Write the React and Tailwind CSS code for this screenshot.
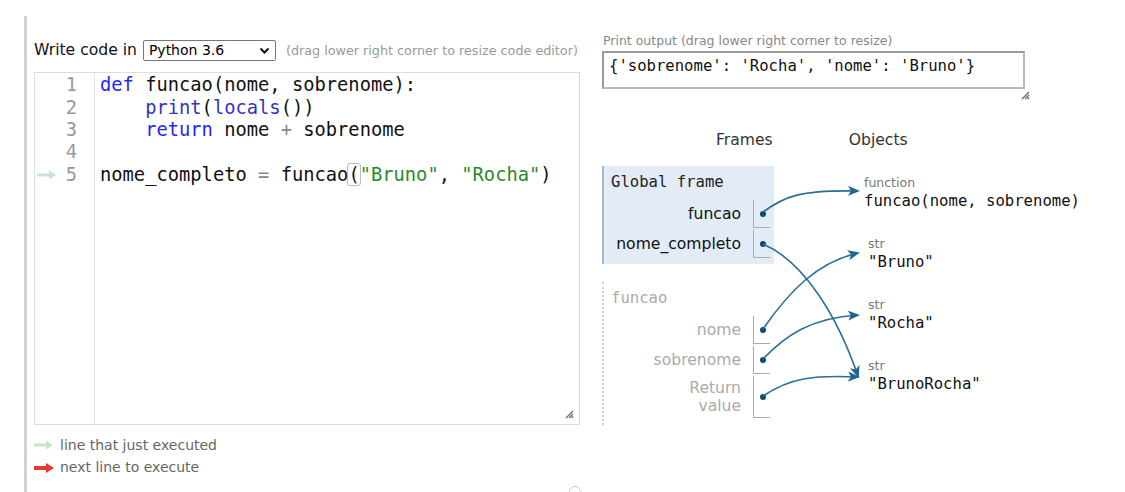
import React from 'react'

const sans = { fontFamily: '"DejaVu Sans", Verdana, sans-serif' }
const mono = { fontFamily: '"DejaVu Sans Mono", "Liberation Mono", monospace' }

function GreenArrow() {
  return (
    <svg width="20" height="10" viewBox="0 0 20 10">
      <path d="M0 3.5 H12 V0.5 L19 5 L12 9.5 V6.5 H0 Z" fill="#c7e5c7" />
    </svg>
  )
}

function RedArrow() {
  return (
    <svg width="20" height="10" viewBox="0 0 20 10">
      <path d="M0 3 H12 V0 L20 5 L12 10 V7 H0 Z" fill="#e8372c" />
    </svg>
  )
}

function ResizeGrip() {
  return (
    <svg width="9" height="9" viewBox="0 0 9 9">
      <path d="M8 1 L1 8 M8 4 L4 8 M8 6.5 L6.5 8" stroke="#666" strokeWidth="1.2" />
    </svg>
  )
}

function CodeLine({ num, arrow, children }) {
  return (
    <div className="flex h-[22.4px] items-center">
      <div className="w-[60px] h-full flex items-center justify-end pr-[18px] text-[#999] relative" style={mono}>
        {arrow && (
          <span className="absolute left-[2px] top-[6px]"><GreenArrow /></span>
        )}
        {num}
      </div>
      <div className="pl-[5px] whitespace-pre text-[#111]">{children}</div>
    </div>
  )
}

function VarRow({ label, muted, tall }) {
  return (
    <div className={'flex justify-end items-center pr-[4px] ' + (tall ? 'h-[42px]' : 'h-[28px]')}>
      <div className={'text-right leading-[18px] ' + (muted ? 'text-[#aaa]' : 'text-[#111]')}>
        {label}
      </div>
      <div className="ml-[12px] w-[17px] h-full border-l border-b border-[#aaa] flex items-center">
        <div className="ml-[6px] w-[6px] h-[6px] rounded-full bg-[#0b4a72]" />
      </div>
    </div>
  )
}

function HeapObj({ type, value, indent }) {
  return (
    <div className={'h-[61px] ' + (indent ? 'pl-[4px]' : '')}>
      <div className="text-[12.5px] leading-[16px] text-[#777]">{type}</div>
      <div className="text-[15.6px] leading-[20px] text-[#111]" style={mono}>{value}</div>
    </div>
  )
}

const kw = 'text-[#2525ff]'
const fn = 'text-[#3434c4]'
const str = 'text-[#2a8a2a]'
const op = 'text-[#888]'

export default function App() {
  return (
    <div className="w-[1125px] h-[492px] bg-white relative overflow-hidden" style={sans}>
      <div className="flex">

        {/* left: code editor */}
        <div className="ml-[24px] mt-[16px] h-[476px] w-[556px] border-l-[3px] border-[#d2d2d2] pl-[7px] pt-[24px]">
          <div className="flex items-center h-[21px]">
            <span className="text-[15.6px] text-[#111]">Write code in</span>
            <div className="ml-[6px] w-[133px] h-[21px] border border-[#767676] rounded-[2px] flex items-center justify-between px-[5px] text-[14px] text-black">
              <span>Python 3.6</span>
              <svg width="11" height="8" viewBox="0 0 11 8">
                <path d="M1.5 1.5 L5.5 5.5 L9.5 1.5" stroke="#111" strokeWidth="2" fill="none" />
              </svg>
            </div>
            <span className="ml-[10px] text-[12.75px] text-[#999]">(drag lower right corner to resize code editor)</span>
          </div>

          <div className="mt-[11px] w-[546px] h-[353px] border border-[#ddd] relative flex">
            <div className="absolute left-[59px] top-0 bottom-0 w-px bg-[#e4e4e4]" />
            <div className="pt-px text-[18.75px] w-full" style={mono}>
              <CodeLine num="1">
                <span className={kw}>def</span> funcao(nome, sobrenome):
              </CodeLine>
              <CodeLine num="2">
                {'    '}<span className={fn}>print</span>(<span className={fn}>locals</span>())
              </CodeLine>
              <CodeLine num="3">
                {'    '}<span className={kw}>return</span> nome <span className={op}>+</span> sobrenome
              </CodeLine>
              <CodeLine num="4">{''}</CodeLine>
              <CodeLine num="5" arrow>
                nome_completo <span className={op}>=</span> funcao<span className="outline outline-1 outline-[#bbb] rounded-[2px]">(</span><span className={str}>"Bruno"</span>, <span className={str}>"Rocha"</span>)
              </CodeLine>
            </div>
            <span className="absolute right-[5px] bottom-[5px] leading-none"><ResizeGrip /></span>
          </div>

          <div className="mt-[9px] text-[14px] text-[#666]">
            <div className="flex items-center h-[22px]">
              <GreenArrow />
              <span className="ml-[6px]">line that just executed</span>
            </div>
            <div className="flex items-center h-[23px]">
              <RedArrow />
              <span className="ml-[6px]">next line to execute</span>
            </div>
          </div>
        </div>

        {/* right: output + visualization */}
        <div className="ml-[22px] pt-[33px] w-[500px]">
          <div className="text-[12.5px] leading-[16px] text-[#888] pl-px">
            Print output (drag lower right corner to resize)
          </div>
          <div className="mt-[2px] w-[423px] h-[38px] border-2 border-[#b9b9b9] border-t-[#999] border-l-[#999] px-[5px] pt-[1px]">
            <span className="text-[15.6px] leading-[20px] text-[#111]" style={mono}>
              {"{'sobrenome': 'Rocha', 'nome': 'Bruno'}"}
            </span>
          </div>
          <div className="w-[428px] flex justify-end h-[12px] items-center">
            <ResizeGrip />
          </div>

          <div className="mt-[30px] flex text-[15.6px] text-[#333] h-[20px] items-center">
            <span className="ml-[114px]">Frames</span>
            <span className="ml-[76px]">Objects</span>
          </div>

          <div className="mt-[15px] flex">
            <div className="w-[172px] text-[15.6px]">
              <div className="bg-[#e2ebf6] border-l-2 border-[#a8b8c8] pt-[6px] pb-[6px]">
                <div className="pl-[7px] h-[20px] leading-[20px] text-[#222]" style={mono}>Global frame</div>
                <div className="mt-[8px] flex flex-col gap-[2px]">
                  <VarRow label="funcao" />
                  <VarRow label="nome_completo" />
                </div>
              </div>

              <div className="mt-[18px] h-[143px] border-l-2 border-dotted border-[#d0d0d0] pt-[6px]">
                <div className="pl-[7px] h-[20px] leading-[20px] text-[#aaa]" style={mono}>funcao</div>
                <div className="mt-[8px] flex flex-col gap-[2px]">
                  <VarRow label="nome" muted />
                  <VarRow label="sobrenome" muted />
                  <VarRow label={<>Return<br />value</>} muted tall />
                </div>
              </div>
            </div>

            <div className="ml-[90px] pt-[9px]">
              <HeapObj type="function" value="funcao(nome, sobrenome)" />
              <HeapObj type="str" value={'"Bruno"'} indent />
              <HeapObj type="str" value={'"Rocha"'} indent />
              <HeapObj type="str" value={'"BrunoRocha"'} indent />
            </div>
          </div>
        </div>
      </div>

      {/* pointer arrows drawn over the frames and objects */}
      <svg className="absolute left-0 top-0 pointer-events-none" width="1125" height="492">
        <defs>
          <marker id="head" markerWidth="12" markerHeight="10" refX="10" refY="5" orient="auto" markerUnits="userSpaceOnUse">
            <path d="M0 0 L12 5 L0 10 L3 5 Z" fill="#1d6690" />
          </marker>
        </defs>
        <g stroke="#2a6f97" strokeWidth="1.6" fill="none" markerEnd="url(#head)">
          <path d="M763 212 C 785 196, 800 190, 858 191" />
          <path d="M763 244 C 805 262, 838 318, 858 376" />
          <path d="M763 329 C 790 290, 818 262, 858 253" />
          <path d="M763 359 C 785 336, 810 318, 858 315" />
          <path d="M763 396 C 790 378, 812 375, 858 377" />
        </g>
      </svg>

      <div className="absolute left-[569px] top-[486px] w-[12px] h-[12px] rounded-full border border-[#ccc]" />
    </div>
  )
}
